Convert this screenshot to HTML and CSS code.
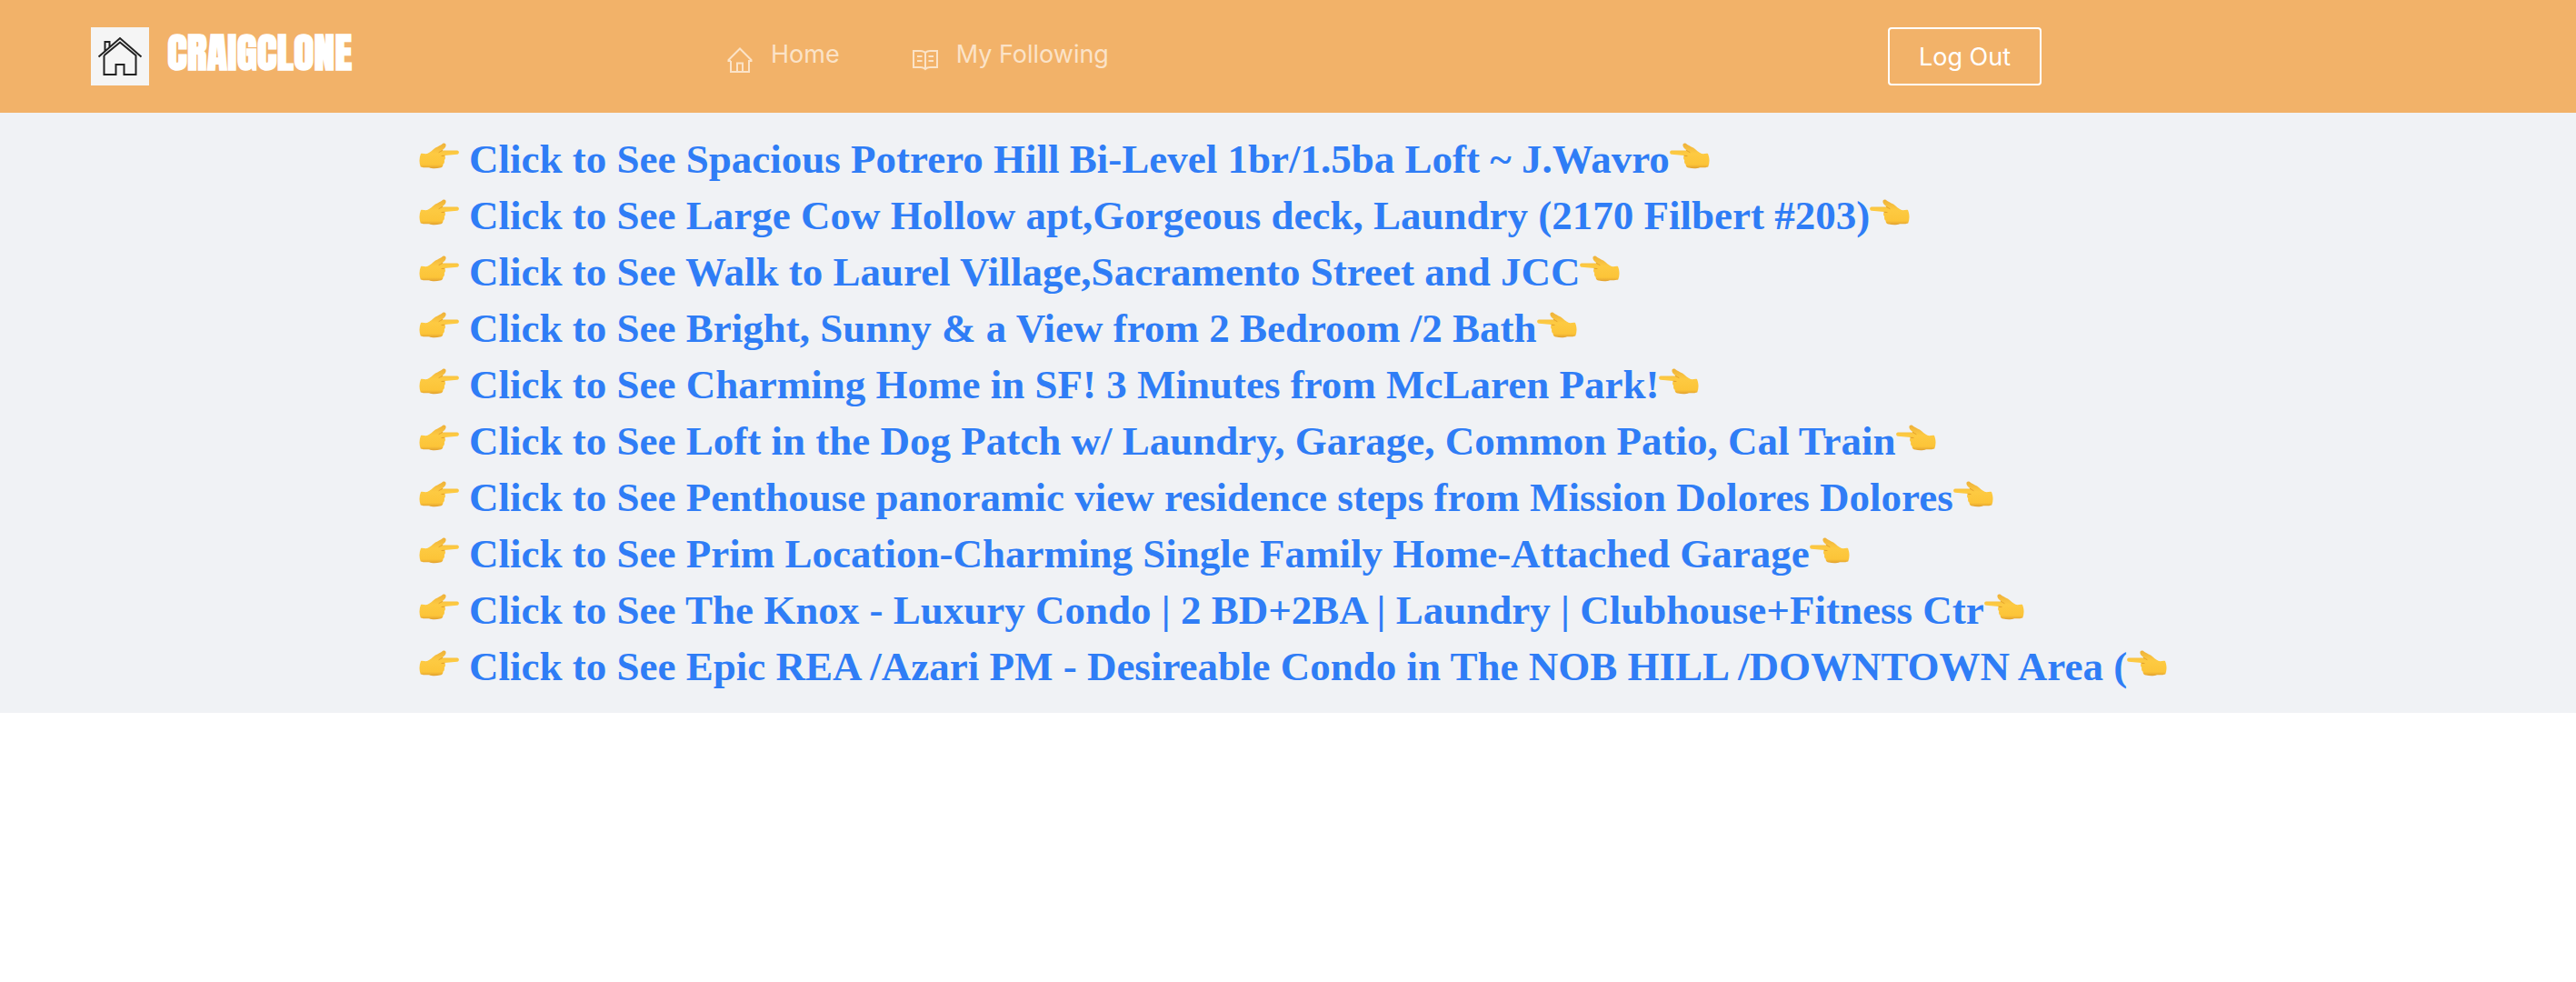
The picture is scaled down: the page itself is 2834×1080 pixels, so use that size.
FILE: index.html
```
<!DOCTYPE html>
<html lang="en">
<head>
<meta charset="utf-8">
<title>Craigclone</title>
<link rel="stylesheet" href="styles.css">
</head>
<body>
<svg class="sprite" aria-hidden="true">
  <defs>
    <linearGradient id="skin" x1="0" y1="0" x2="0" y2="1">
      <stop offset="0" stop-color="#eeb13a"/>
      <stop offset="0.4" stop-color="#fdca42"/>
      <stop offset="0.85" stop-color="#fcc438"/>
      <stop offset="1" stop-color="#e0a030"/>
    </linearGradient>
    <symbol id="hand" viewBox="0 0 44 30">
      <path fill="url(#skin)" d="M2 12C4 11.500 7 12.500 9 12C12 11 15 7.500 18 5.500C21 4 24 2.500 26 1C28 0 30 1 29.500 3.500C29 5.500 27 7 25.500 8.500L42 8.500C44.500 8.500 44.500 12.500 42 12.800L28 14C29.500 16 29 18 27.800 19C28.300 21.500 27.500 23 26.500 23.500C26.500 26 25 27.500 23 27.500C19 28.500 14 28.500 11 27.200C8 27.500 4 27.300 1.800 26.500C0 22 0 17 2 12Z"/>
      <path fill="none" stroke="#e3a02a" stroke-width="1" stroke-linecap="round" d="M22 10.500C23 10 24 9.300 25.500 8.500M28 14.300L25 14.500"/>
    </symbol>
  </defs>
</svg>
<header class="header">
  <a class="brand" href="#">
    <svg class="logo" viewBox="0 0 64 64" aria-hidden="true">
      <path d="M8.500 32.500L32 12L55.500 32.500M14.500 31V52H27.500V41H36.500V52H49.500V31L32 16.500L14.500 31M15.500 26V16H20.500V21.500"/>
    </svg>
    <span class="brand-name">CRAIGCLONE</span>
  </a>
  <nav class="nav">
    <a class="nav-link" href="#">
      <svg class="nav-icon" viewBox="0 0 28 28" aria-hidden="true"><path d="M4 15V27H24V15H26.500V14L14 1.500L1.500 14V15H4M11 27V17.500H17V27"/></svg>
      <span>Home</span>
    </a>
    <a class="nav-link" href="#">
      <svg class="nav-icon" viewBox="0 0 28 28" aria-hidden="true"><path d="M14 6C12.500 4.500 11 4 9 4H1V22H9C11 22 12.500 22.500 14 24C15.500 22.500 17 22 19 22H27V4H19C17 4 15.500 4.500 14 6V23M5 10H10.500M5 15H10.500M17.500 10H23M17.500 15H23"/></svg>
      <span>My Following</span>
    </a>
  </nav>
  <button class="logout" type="button">Log Out</button>
</header>
<main class="content">
  <ul class="listings">
    <li><a href="#"><svg class="hand"><use href="#hand"/></svg><span>Click to See Spacious Potrero Hill Bi-Level 1br/1.5ba Loft ~ J.Wavro</span><svg class="hand hand-left"><use href="#hand"/></svg></a></li>
    <li><a href="#"><svg class="hand"><use href="#hand"/></svg><span>Click to See Large Cow Hollow apt,Gorgeous deck, Laundry (2170 Filbert #203)</span><svg class="hand hand-left"><use href="#hand"/></svg></a></li>
    <li><a href="#"><svg class="hand"><use href="#hand"/></svg><span>Click to See Walk to Laurel Village,Sacramento Street and JCC</span><svg class="hand hand-left"><use href="#hand"/></svg></a></li>
    <li><a href="#"><svg class="hand"><use href="#hand"/></svg><span>Click to See Bright, Sunny &amp; a View from 2 Bedroom /2 Bath</span><svg class="hand hand-left"><use href="#hand"/></svg></a></li>
    <li><a href="#"><svg class="hand"><use href="#hand"/></svg><span>Click to See Charming Home in SF! 3 Minutes from McLaren Park!</span><svg class="hand hand-left"><use href="#hand"/></svg></a></li>
    <li><a href="#"><svg class="hand"><use href="#hand"/></svg><span>Click to See Loft in the Dog Patch w/ Laundry, Garage, Common Patio, Cal Train</span><svg class="hand hand-left"><use href="#hand"/></svg></a></li>
    <li><a href="#"><svg class="hand"><use href="#hand"/></svg><span>Click to See Penthouse panoramic view residence steps from Mission Dolores Dolores</span><svg class="hand hand-left"><use href="#hand"/></svg></a></li>
    <li><a href="#"><svg class="hand"><use href="#hand"/></svg><span>Click to See Prim Location-Charming Single Family Home-Attached Garage</span><svg class="hand hand-left"><use href="#hand"/></svg></a></li>
    <li><a href="#"><svg class="hand"><use href="#hand"/></svg><span>Click to See The Knox - Luxury Condo | 2 BD+2BA | Laundry | Clubhouse+Fitness Ctr</span><svg class="hand hand-left"><use href="#hand"/></svg></a></li>
    <li><a href="#"><svg class="hand"><use href="#hand"/></svg><span>Click to See Epic REA /Azari PM - Desireable Condo in The NOB HILL /DOWNTOWN Area (</span><svg class="hand hand-left"><use href="#hand"/></svg></a></li>
  </ul>
</main>
</body>
</html>
```
FILE: styles.css
```
* { box-sizing: border-box; }
body {
  margin: 0;
  background: #fff;
  font-family: Inter, "Liberation Sans", sans-serif;
  font-size: 27px;
}
a { color: inherit; text-decoration: none; }
.sprite { position: absolute; width: 0; height: 0; }

.header {
  display: grid;
  grid-template-columns: 700px 1fr auto;
  align-items: start;
  padding: 30px 588px 30px 100px;
  background: #f2b269;
}
.brand { display: flex; gap: 20px; color: #fff; }
.logo {
  width: 64px;
  height: 64px;
  background: #f5f5f5;
  fill: none;
  stroke: #222;
  stroke-width: 2;
}
.brand-name {
  font-family: Impact, Anton, "Roboto Condensed", "Liberation Sans", sans-serif;
  font-size: 46px;
  font-weight: 700;
  line-height: 56px;
}
.nav { display: flex; gap: 80px; }
.nav-link {
  display: flex;
  gap: 20px;
  line-height: 60px;
  color: #fbe3c8;
}
.nav-icon {
  width: 28px;
  height: 28px;
  margin-top: 22px;
  fill: none;
  stroke: currentColor;
  stroke-width: 2;
}
.logout {
  height: 64px;
  padding: 0 32px;
  border: 2px solid #fff;
  border-radius: 4px;
  background: transparent;
  color: #fff;
  font: inherit;
}

.content { padding: 20px 460px; background: #f0f2f5; }
.listings {
  margin: 0;
  padding: 0;
  list-style: none;
  font-family: "Liberation Serif", "Times New Roman", serif;
  font-size: 45px;
  font-weight: 700;
  line-height: 62px;
  color: #2f7df6;
}
.listings a { display: flex; white-space: nowrap; }
.hand { flex: none; width: 44px; height: 30px; margin: 13px 11px 0 1px; }
.hand-left { margin: 13px 0 0; transform: scaleX(-1); }
```
